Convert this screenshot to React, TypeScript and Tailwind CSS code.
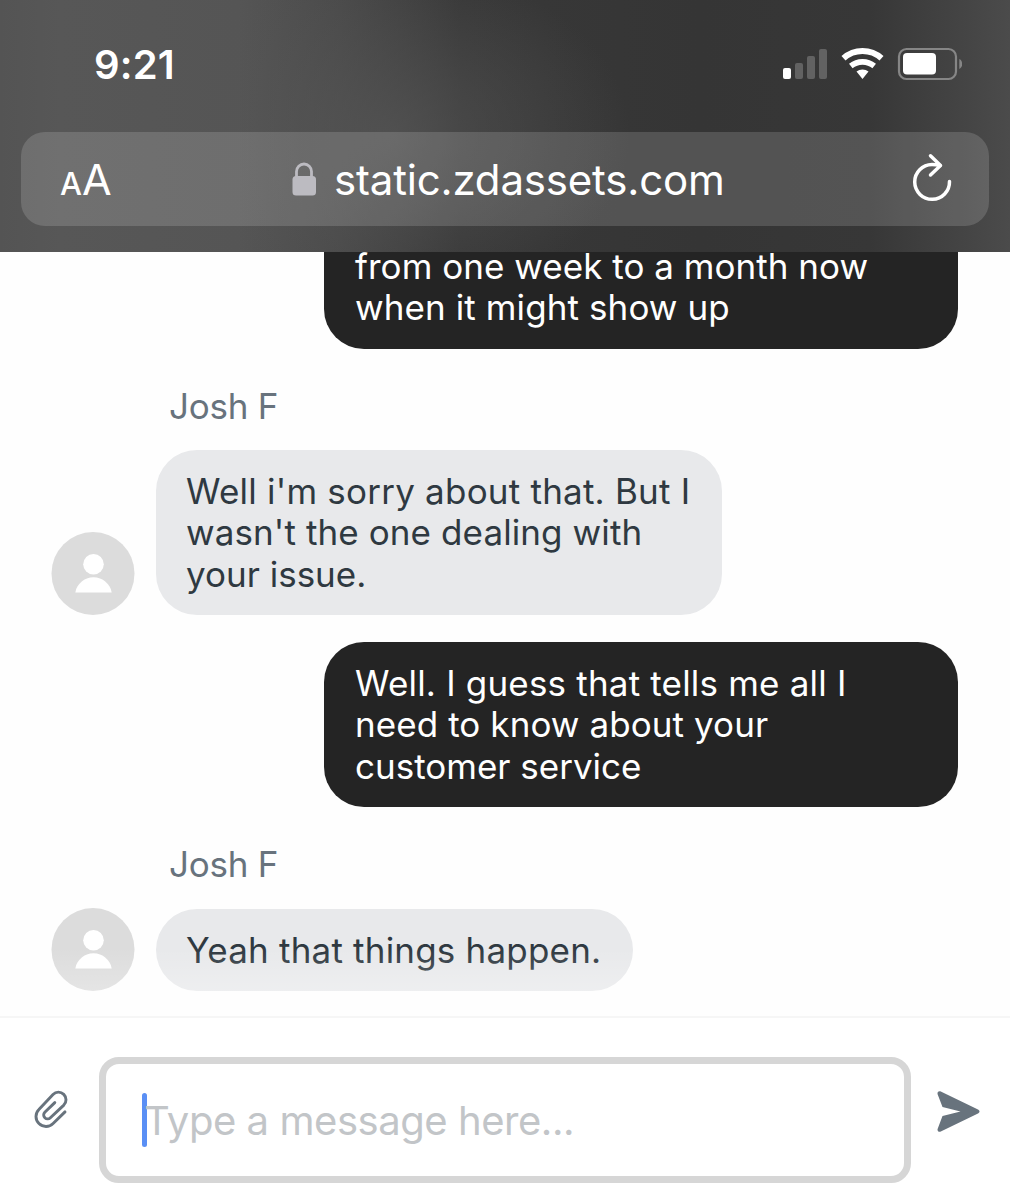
import React from 'react';
import clsx from 'clsx';

interface Line {
  text: string;
  tracking?: string;
}

interface BubbleProps {
  lines: Line[];
  className?: string;
}

function StatusIcons() {
  return (
    <svg width="182" height="36" viewBox="0 0 182 36" fill="none">
      <rect x="3" y="22" width="8" height="11" rx="2" fill="#fff" />
      <rect x="15" y="17" width="8" height="16" rx="2" fill="#626262" />
      <rect x="27" y="10" width="8" height="23" rx="2" fill="#626262" />
      <rect x="39" y="3" width="8" height="30" rx="2" fill="#626262" />
      <path d="M63.5 12.2a28.5 28.5 0 0 1 38 0" stroke="#fff" strokeWidth="6" />
      <path d="M70.8 20a18.5 18.5 0 0 1 23.4 0" stroke="#fff" strokeWidth="5.6" />
      <path d="M76.5 25.6a9.6 9.6 0 0 1 12 0L82.500 33Z" fill="#fff" />
      <rect x="119" y="3" width="57" height="30" rx="7.500" stroke="#868686" strokeWidth="2.200" />
      <rect x="123" y="7" width="33" height="21.500" rx="4" fill="#fff" />
      <path d="M179.300 13c4 2 4 8 0 10Z" fill="#868686" />
    </svg>
  );
}

function LockIcon() {
  return (
    <svg width="24" height="34" viewBox="0 0 24 34" fill="none">
      <path d="M4.500 16V9.500a7.500 7.500 0 0 1 15 0V16" stroke="#bcbbc1" strokeWidth="2.800" />
      <rect x="0.500" y="14" width="23.500" height="19.500" rx="3.500" fill="#bcbbc1" />
    </svg>
  );
}

function ReloadIcon() {
  return (
    <svg
      width="44"
      height="52"
      viewBox="0 0 44 52"
      fill="none"
      stroke="#fff"
      strokeWidth="3.500"
      strokeLinecap="round"
      strokeLinejoin="round"
    >
      <path d="M39.500 28.500A17.400 17.400 0 1 1 22 11.500Q26 11.500 30 12.500" />
      <path d="M20.500 2.800l10 9.700L20.500 22" />
    </svg>
  );
}

function Avatar() {
  return (
    <svg className="shrink-0" width="84" height="83" viewBox="0 0 84 83">
      <circle cx="42" cy="41.500" r="41.500" fill="#dcdcdc" />
      <circle cx="42.500" cy="32.300" r="10.300" fill="#fff" />
      <path d="M24.300 60.500c1.400-8.500 9-15.200 18.200-15.200s16.800 6.700 18.200 15.200Z" fill="#fff" />
    </svg>
  );
}

function Bubble({ lines, className }: BubbleProps) {
  return (
    <div className={clsx('pb-5 pt-[21px] text-[35px] leading-[41.5px]', className)}>
      {lines.map((line) => (
        <p key={line.text} className={clsx('whitespace-nowrap', line.tracking)}>
          {line.text}
        </p>
      ))}
    </div>
  );
}

function SentBubble({ lines, className }: BubbleProps) {
  return (
    <Bubble
      lines={lines}
      className={clsx('ml-auto mr-[52px] w-[634px] shrink-0 rounded-[40px] bg-[#242424] pl-[31px] text-white', className)}
    />
  );
}

function ReceivedBubble({ lines, className }: BubbleProps) {
  return (
    <div className="flex shrink-0 items-end gap-[21px] pl-[51px]">
      <Avatar />
      <Bubble lines={lines} className={clsx('rounded-[41px] bg-[#e8e9eb] pl-[30px] text-[#2f3941]', className)} />
    </div>
  );
}

function AgentName() {
  return (
    <p className="mb-[23px] mt-9 shrink-0 pl-[169px] text-[35px] leading-[42px] tracking-[-0.25px] text-[#68737d]">
      Josh F
    </p>
  );
}

function BrowserHeader() {
  return (
    <header className="relative z-10 flex h-[252px] shrink-0 flex-col bg-[radial-gradient(ellipse_240px_170px_at_390px_135px,#565656b3,#56565600),linear-gradient(90deg,#545454_0px,#575757_60px,#555555_240px,#4a4a4a_340px,#383838_460px,#353535_700px,#373737_870px,#4b4b4b_1010px)] text-white">
      <div className="flex h-[132px] items-start justify-between pl-[94px] pr-12 pt-[46px]">
        <span className="mt-[-5px] text-[40px] font-semibold leading-[48px] tracking-[0.2px]">9:21</span>
        <StatusIcons />
      </div>
      <div className="mx-[21px] flex h-[94px] items-center rounded-[24px] bg-white/15 pl-[39px] pr-[35px]">
        <div className="flex w-[232px] items-baseline pt-1 leading-[50px]">
          <span className="text-[31px] font-medium">A</span>
          <span className="text-[43px]">A</span>
        </div>
        <LockIcon />
        <span className="ml-[18px] pt-0.5 text-[42px] leading-[50px] tracking-[-0.18px]">static.zdassets.com</span>
        <span className="ml-auto">
          <ReloadIcon />
        </span>
      </div>
    </header>
  );
}

function Composer() {
  return (
    <footer className="flex h-[184px] shrink-0 border-t-2 border-[#f6f6f6] bg-white">
      <div className="w-[99px] pl-8 pt-[72px]">
        <svg
          width="38"
          height="40"
          viewBox="0 0 38 40"
          fill="none"
          stroke="#68737d"
          strokeWidth="2.900"
          strokeLinecap="round"
        >
          <path d="M33 21.900L21.100 33.500A10 10 0 0 1 6.900 19.400L21 4.400A7.600 7.600 0 0 1 31.800 15.100L18.400 27.700A3.900 3.900 0 0 1 12.800 22.200L22.800 12.600" />
        </svg>
      </div>
      <div className="mt-[39px] flex h-[126px] w-[812px] items-center rounded-[20px] border-[7px] border-[#d6d6d6] pl-9">
        <span className="h-[54px] w-[5px] rounded-full bg-[#5a8ff5]" />
        <span className="-ml-[3px] pt-0.5 text-[40px] leading-[50px] tracking-[-0.45px] text-[#c2c5c8]">
          Type a message here...
        </span>
      </div>
      <svg className="ml-[26px] mt-[72px]" width="43" height="44" viewBox="0 0 43 44" fill="#68737d">
        <path d="M.7 4.500C-.1 2.200 1.700.6 3.800 1.500L41 19.500c2 1 2 3 0 4L3.800 41.600C1.700 42.500-.1 40.800.7 38.700L5.500 26 23.500 21.600 5.500 17.100Z" />
      </svg>
    </footer>
  );
}

export default function App() {
  return (
    <div className="flex h-[1200px] w-[1010px] flex-col overflow-hidden bg-[#fefefe] font-['Inter',sans-serif]">
      <BrowserHeader />
      <main className="relative flex h-[764px] flex-col justify-end overflow-hidden pb-[25px]">
        <SentBubble
          className="rounded-t-none"
          lines={[
            { text: 'from one week to a month now', tracking: 'tracking-[0.03px]' },
            { text: 'when it might show up', tracking: 'tracking-[0.1px]' },
          ]}
        />
        <AgentName />
        <ReceivedBubble
          className="w-[566px]"
          lines={[
            { text: "Well i'm sorry about that. But I", tracking: 'tracking-[0.22px]' },
            { text: "wasn't the one dealing with", tracking: 'tracking-[0.1px]' },
            { text: 'your issue.' },
          ]}
        />
        <SentBubble
          className="mt-[26.5px]"
          lines={[
            { text: 'Well. I guess that tells me all I', tracking: 'tracking-[0.19px]' },
            { text: 'need to know about your', tracking: 'tracking-[0.08px]' },
            { text: 'customer service' },
          ]}
        />
        <AgentName />
        <ReceivedBubble
          className="w-[477px]"
          lines={[{ text: 'Yeah that things happen.', tracking: 'tracking-[0.2px]' }]}
        />
        {/* messages fade out above the composer */}
        <div className="absolute inset-x-0 bottom-0 h-[68px] bg-linear-to-b from-white/0 to-white/40" />
      </main>
      <Composer />
    </div>
  );
}
